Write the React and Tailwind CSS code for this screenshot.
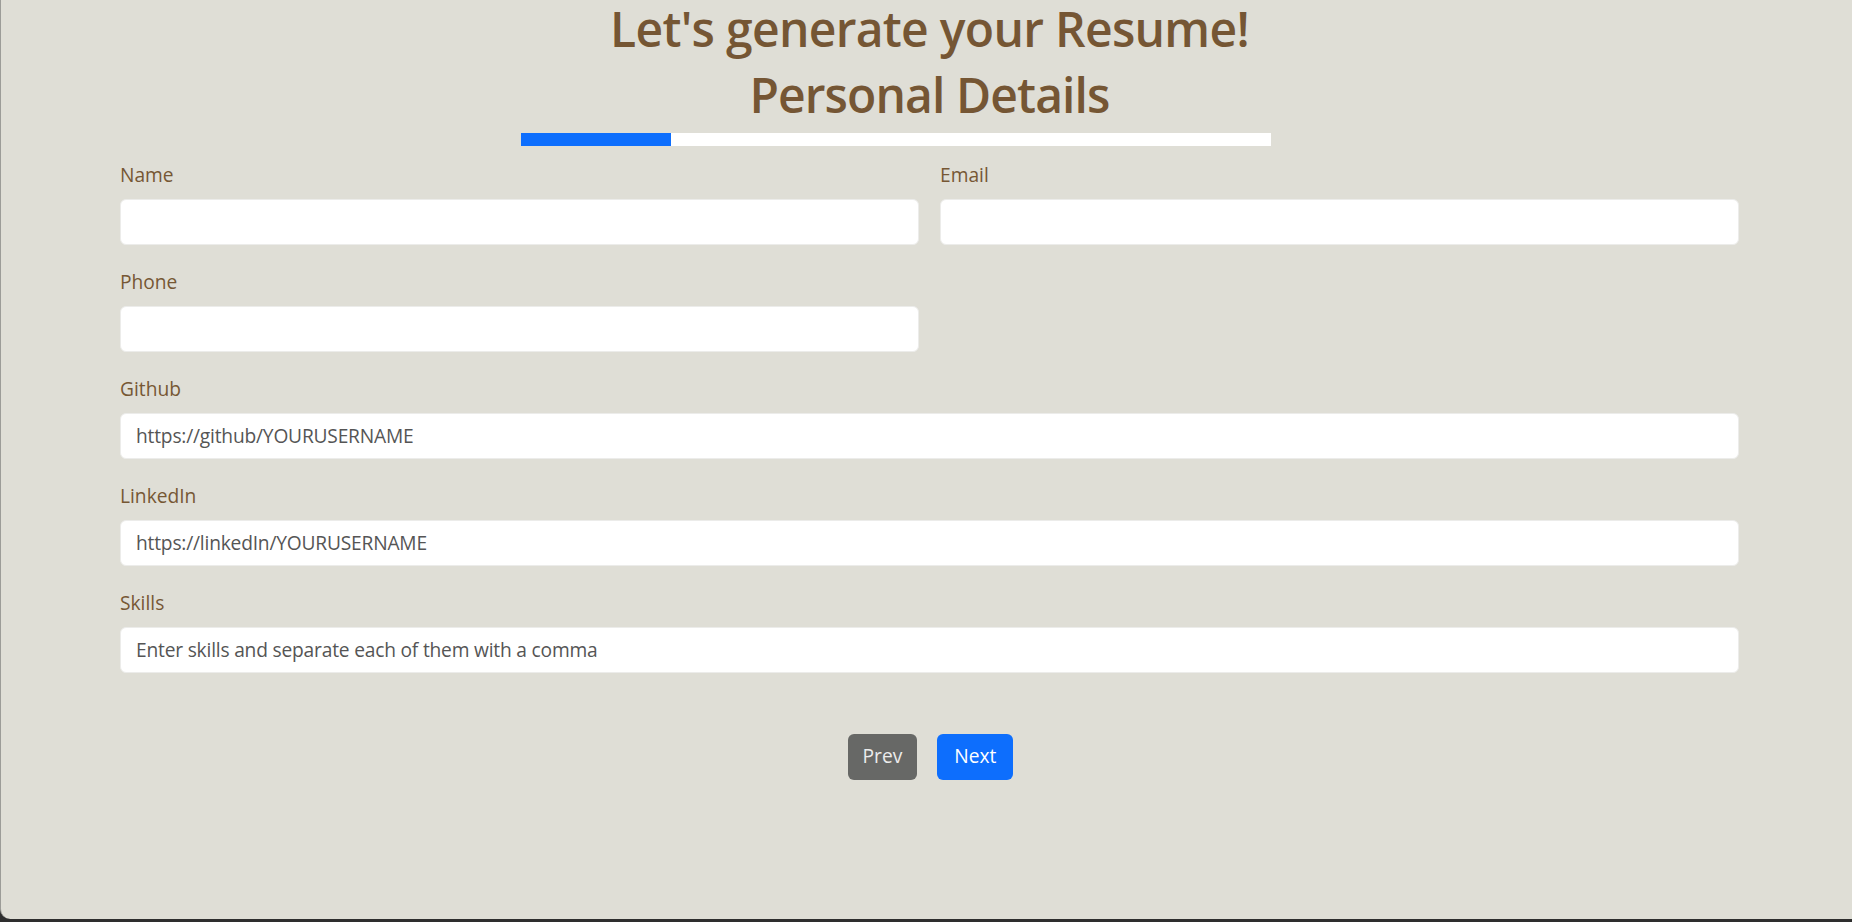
import React from 'react';

const Field = ({ label, placeholder, wide }) => (
  <div className={`mb-[23px] ${wide ? 'col-span-2' : ''}`}>
    <label className="block text-[19.2px] leading-[28.8px] text-[#765734] mb-[9.6px]">{label}</label>
    <input
      type="text"
      placeholder={placeholder}
      className="block w-full h-[45.6px] rounded-[6px] bg-white border border-[#ececea] px-[15px] text-[19.2px] tracking-[-0.2px] text-[#555] placeholder:text-[#555] outline-none"
    />
  </div>
);

export default function App() {
  return (
    <div className="min-h-[922px] bg-[#2e2e2e]">
      <div className="h-[919px] bg-[#dfded6] rounded-bl-[10px] border-l border-[#9c9c98] pl-[119px] pr-[113px] font-['Open_Sans','Noto_Sans',sans-serif]">
        <h1 className="text-center text-[48px] leading-[58px] font-semibold tracking-[-0.7px] text-[#755634] mb-[7.6px]">
          Let's generate your Resume!
        </h1>
        <h1 className="text-center text-[48px] leading-[57.6px] font-semibold tracking-[-0.9px] text-[#755634] mb-[9.6px]">
          Personal Details
        </h1>
        <div className="ml-[401px] w-[750px] h-[13px] bg-white mb-[15px]">
          <div className="h-full w-[150px] bg-[#0d6efd]" />
        </div>

        <form className="grid grid-cols-2 gap-x-[21px]">
          <Field label="Name" />
          <Field label="Email" />
          <Field label="Phone" />
          <div />
          <Field label="Github" placeholder="https://github/YOURUSERNAME" wide />
          <Field label="LinkedIn" placeholder="https://linkedIn/YOURUSERNAME" wide />
          <Field label="Skills" placeholder="Enter skills and separate each of them with a comma" wide />
        </form>

        <div className="flex justify-center gap-[20px] mt-[38px] pl-[2px]">
          <button className="h-[46px] px-[15px] rounded-[6px] bg-[#676866] text-[19.2px] text-[#ececec]">Prev</button>
          <button className="h-[46px] px-[17px] rounded-[6px] bg-[#0d6efd] text-[19.2px] text-white">Next</button>
        </div>
      </div>
    </div>
  );
}
